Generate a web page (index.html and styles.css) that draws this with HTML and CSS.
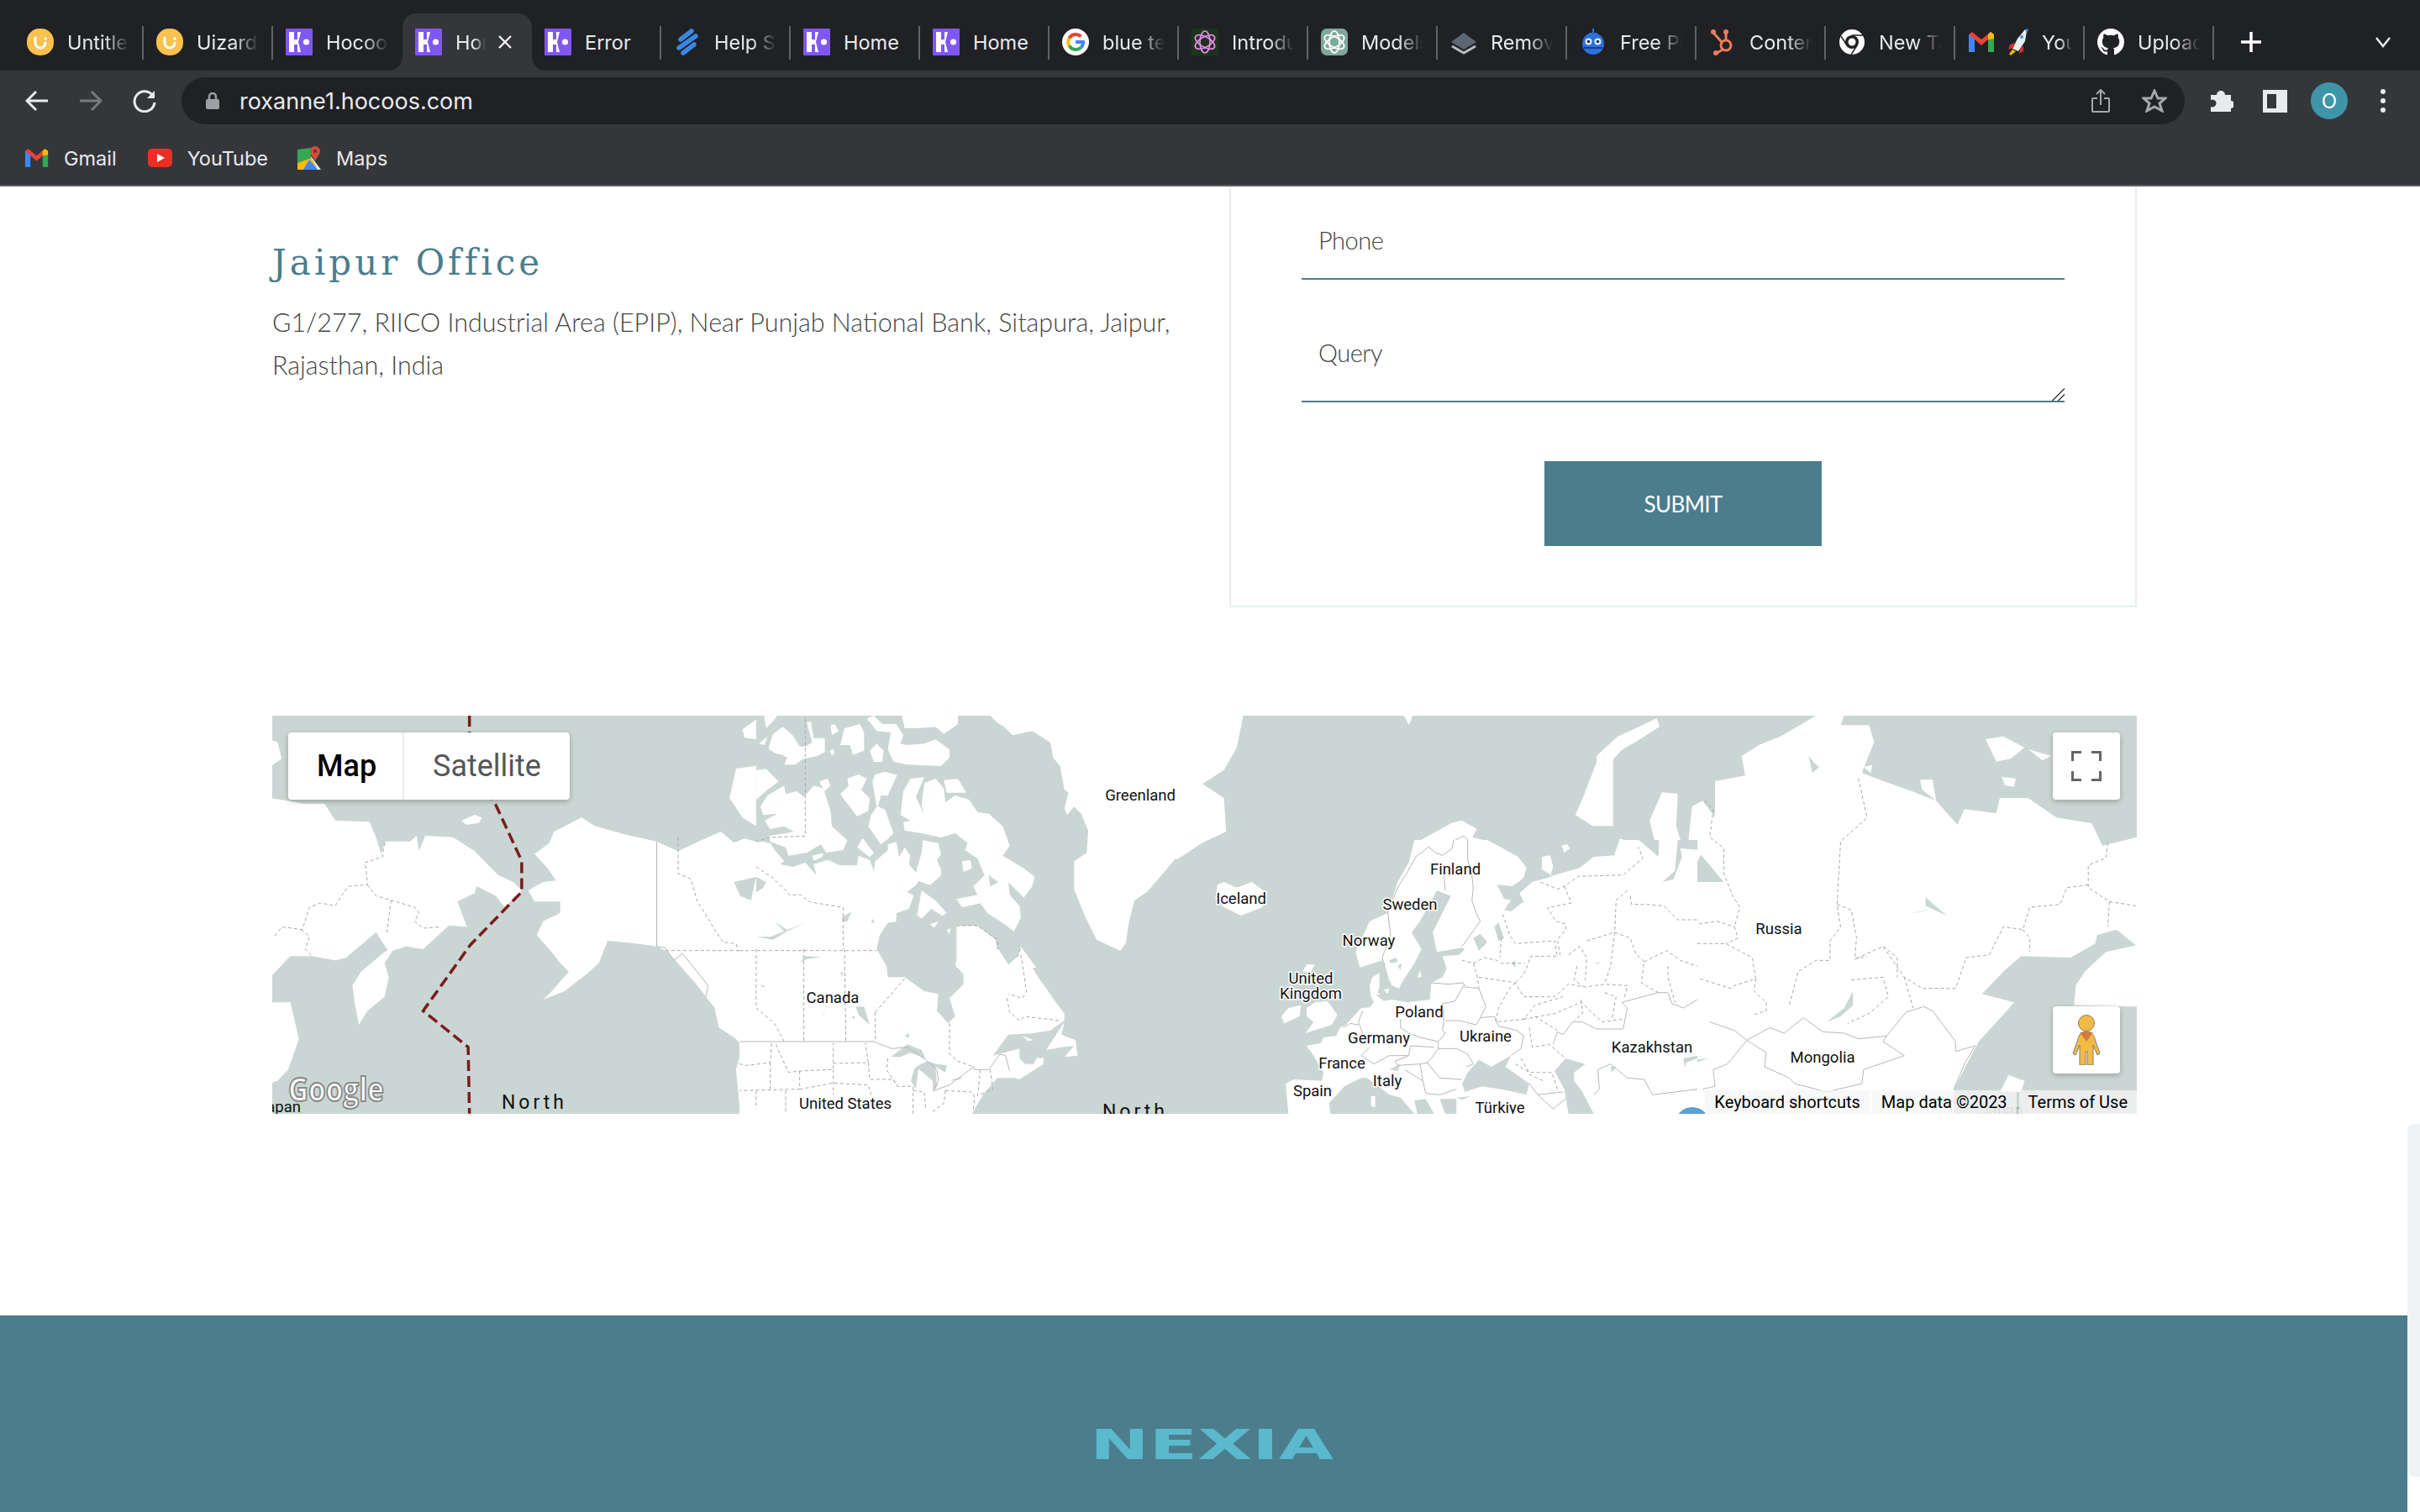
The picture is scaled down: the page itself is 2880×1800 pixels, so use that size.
FILE: index.html
```html
<!DOCTYPE html>
<html lang="en">
<head>
    <meta charset="UTF-8">
    <meta name="viewport" content="width=device-width, initial-scale=1.0">
    <title>Contact - Nexia</title>
    <link rel="stylesheet" href="styles.css">
</head>
<body>
    <!-- Favicon symbols -->
    <svg class="sprite" xmlns="http://www.w3.org/2000/svg">
        <symbol id="fav-uizard" viewBox="0 0 32 32">
            <rect width="32" height="32" rx="15" fill="#f9c14f"/>
            <path d="M10 11v6a6 6 0 0 0 12 0" fill="none" stroke="#fff" stroke-width="3" stroke-linecap="round"/>
            <circle cx="22" cy="12" r="1.8" fill="#fff"/>
        </symbol>
        <symbol id="fav-hocoos" viewBox="0 0 32 32">
            <rect width="32" height="32" rx="1" fill="#8057f2"/>
            <path d="M4 4h6v9h4V4h4l-3 12 3 12h-4v-9h-4v9H4z" fill="#fff"/>
            <circle cx="24.5" cy="16" r="3.6" fill="#fff"/>
        </symbol>
        <symbol id="fav-helpscout" viewBox="0 0 32 32">
            <g fill="none" stroke="#3b86e2" stroke-width="5.5" stroke-linecap="round">
                <path d="M8 13 21 3"/>
                <path d="M6 23 26 9"/>
                <path d="M11 29 24 19"/>
            </g>
        </symbol>
        <symbol id="fav-google" viewBox="0 0 32 32">
            <circle cx="16" cy="16" r="16" fill="#fff"/>
            <g fill="none" stroke-width="4">
                <path d="M8.5 11.5A9 9 0 0 1 22.5 9.5" stroke="#ea4335"/>
                <path d="M8.5 11.5A9 9 0 0 0 8.5 20.5" stroke="#fbbc05"/>
                <path d="M8.5 20.5A9 9 0 0 0 22.5 22.5" stroke="#34a853"/>
                <path d="M22.5 22.5A9 9 0 0 0 25 16H16" stroke="#4285f4"/>
            </g>
        </symbol>
        <symbol id="fav-openai-dark" viewBox="0 0 32 32">
            <rect width="32" height="32" fill="#1d331d"/>
            <g fill="none" stroke="#e58be8" stroke-width="1.7">
                <ellipse cx="16" cy="16" rx="6" ry="13"/>
                <ellipse cx="16" cy="16" rx="6" ry="13" transform="rotate(60 16 16)"/>
                <ellipse cx="16" cy="16" rx="6" ry="13" transform="rotate(120 16 16)"/>
            </g>
        </symbol>
        <symbol id="fav-openai" viewBox="0 0 32 32">
            <rect width="32" height="32" rx="7" fill="#7fa99b"/>
            <g fill="none" stroke="#fff" stroke-width="1.7">
                <ellipse cx="16" cy="16" rx="6" ry="13"/>
                <ellipse cx="16" cy="16" rx="6" ry="13" transform="rotate(60 16 16)"/>
                <ellipse cx="16" cy="16" rx="6" ry="13" transform="rotate(120 16 16)"/>
            </g>
        </symbol>
        <symbol id="fav-layers" viewBox="0 0 32 32">
            <polygon points="16,5 31,16 16,25 1,16" fill="#5c6772"/>
            <polyline points="2,21 16,29 30,21" fill="none" stroke="#b9bdc2" stroke-width="3"/>
        </symbol>
        <symbol id="fav-robot" viewBox="0 0 32 32">
            <path d="M16 0v6" stroke="#2f6fdb" stroke-width="2"/>
            <circle cx="16" cy="18" r="13" fill="#2f6fdb"/>
            <rect x="11" y="5" width="10" height="3" fill="#2f6fdb"/>
            <circle cx="10.5" cy="15.5" r="4" fill="#dfe9fb"/>
            <circle cx="21.5" cy="15.5" r="4" fill="#dfe9fb"/>
            <circle cx="10.5" cy="15.5" r="1.8" fill="#16305f"/>
            <circle cx="21.5" cy="15.5" r="1.8" fill="#16305f"/>
            <path d="M5 23h22" stroke="#16305f" stroke-width="1.5"/>
        </symbol>
        <symbol id="fav-hubspot" viewBox="0 0 32 32">
            <g fill="none" stroke="#ee7c57" stroke-width="3">
                <circle cx="20" cy="20" r="6"/>
                <path d="M20 14V5"/>
                <path d="M15 16 5 5"/>
                <path d="M16 25 8 30"/>
            </g>
            <g fill="#ee7c57">
                <circle cx="5" cy="4" r="3"/>
                <circle cx="20" cy="4" r="3"/>
                <circle cx="8" cy="29" r="3"/>
            </g>
        </symbol>
        <symbol id="fav-chrome" viewBox="0 0 32 32">
            <circle cx="16" cy="16" r="15" fill="#fff"/>
            <circle cx="16" cy="16" r="8" fill="#202124"/>
            <circle cx="16" cy="16" r="4.5" fill="#fff"/>
            <path d="M16 8h13M22 20l-7 11M10 20 3 9" stroke="#202124" stroke-width="1.5"/>
        </symbol>
        <symbol id="fav-gmail" viewBox="0 0 32 24">
            <rect x="1" y="3" width="7" height="21" fill="#4285f4"/>
            <rect x="24" y="3" width="7" height="21" fill="#34a853"/>
            <polygon points="1,3 5,0 16,9 27,0 31,3 24,9 16,16 8,9" fill="#ea4335"/>
            <polygon points="24,3 27,0 31,3 31,8 24,9" fill="#fbbc04"/>
        </symbol>
        <symbol id="fav-rocket" viewBox="0 0 24 32">
            <polygon points="5,24 11,12 20,1 22,3 20,15 12,27" fill="#e8eef2"/>
            <polygon points="20,1 24,0 22,6" fill="#4a90d9"/>
            <polygon points="8,17 2,19 0,25 6,23" fill="#d93025"/>
            <polygon points="14,24 13,30 18,27 18,20" fill="#d93025"/>
            <polygon points="5,25 9,27 3,32 1,30" fill="#fbbc04"/>
            <circle cx="16" cy="10" r="2" fill="#4a90d9"/>
        </symbol>
        <symbol id="fav-github" viewBox="0 0 16 16">
            <path fill="#fff" d="M8 0C3.58 0 0 3.58 0 8c0 3.54 2.29 6.53 5.47 7.59.4.07.55-.17.55-.38 0-.19-.01-.82-.01-1.49-2.01.37-2.53-.49-2.69-.94-.09-.23-.48-.94-.82-1.13-.28-.15-.68-.52-.01-.53.63-.01 1.08.58 1.23.82.72 1.21 1.87.87 2.33.66.07-.52.28-.87.51-1.07-1.78-.2-3.64-.89-3.64-3.95 0-.87.31-1.59.82-2.15-.08-.2-.36-1.02.08-2.12 0 0 .67-.21 2.2.82.64-.18 1.32-.27 2-.27.68 0 1.36.09 2 .27 1.53-1.04 2.2-.82 2.2-.82.44 1.1.16 1.92.08 2.12.51.56.82 1.27.82 2.15 0 3.07-1.87 3.75-3.65 3.95.29.25.54.73.54 1.48 0 1.07-.01 1.93-.01 2.2 0 .21.15.46.55.38A8.013 8.013 0 0016 8c0-4.42-3.58-8-8-8z"/>
        </symbol>
    </svg>

    <!-- Browser chrome -->
    <header class="browser">
        <div class="tab-strip">
            <div class="tab"><svg class="favicon"><use href="#fav-uizard"/></svg><span class="tab-title fade">Untitled</span></div>
            <div class="tab"><svg class="favicon"><use href="#fav-uizard"/></svg><span class="tab-title fade">Uizard</span></div>
            <div class="tab no-sep"><svg class="favicon"><use href="#fav-hocoos"/></svg><span class="tab-title fade">Hocoos</span></div>
            <div class="tab active">
                <svg class="favicon"><use href="#fav-hocoos"/></svg>
                <span class="tab-title fade narrow">Home</span>
                <svg class="tab-close" viewBox="0 0 16 16"><path d="M1 1l14 14M15 1 1 15"/></svg>
            </div>
            <div class="tab"><svg class="favicon"><use href="#fav-hocoos"/></svg><span class="tab-title">Error</span></div>
            <div class="tab"><svg class="favicon"><use href="#fav-helpscout"/></svg><span class="tab-title fade">Help Scout</span></div>
            <div class="tab"><svg class="favicon"><use href="#fav-hocoos"/></svg><span class="tab-title">Home</span></div>
            <div class="tab"><svg class="favicon"><use href="#fav-hocoos"/></svg><span class="tab-title">Home</span></div>
            <div class="tab"><svg class="favicon"><use href="#fav-google"/></svg><span class="tab-title fade">blue text</span></div>
            <div class="tab"><svg class="favicon"><use href="#fav-openai-dark"/></svg><span class="tab-title fade">Introducing</span></div>
            <div class="tab"><svg class="favicon"><use href="#fav-openai"/></svg><span class="tab-title fade">Models</span></div>
            <div class="tab"><svg class="favicon"><use href="#fav-layers"/></svg><span class="tab-title fade">Remove</span></div>
            <div class="tab"><svg class="favicon"><use href="#fav-robot"/></svg><span class="tab-title fade">Free Plan</span></div>
            <div class="tab"><svg class="favicon"><use href="#fav-hubspot"/></svg><span class="tab-title fade">Content</span></div>
            <div class="tab"><svg class="favicon"><use href="#fav-chrome"/></svg><span class="tab-title fade">New Tab</span></div>
            <div class="tab">
                <svg class="favicon"><use href="#fav-gmail"/></svg>
                <svg class="rocket"><use href="#fav-rocket"/></svg>
                <span class="tab-title fade narrow">Your</span>
            </div>
            <div class="tab"><svg class="favicon"><use href="#fav-github"/></svg><span class="tab-title fade">Upload</span></div>
            <svg class="new-tab" viewBox="0 0 28 28"><path d="M14 2v24M2 14h24"/></svg>
            <svg class="tab-search" viewBox="0 0 20 14"><path d="M2 2l8 10 8-10"/></svg>
        </div>

        <div class="toolbar">
            <svg class="tool-icon" viewBox="0 0 28 28"><path d="M27 14H3M13 3 2 14l11 11"/></svg>
            <svg class="tool-icon dim" viewBox="0 0 28 28"><path d="M1 14h24M15 3l11 11-11 11"/></svg>
            <svg class="tool-icon" viewBox="0 0 28 28"><path d="M24 8a12 12 0 1 0 2 8"/><path class="solid" d="M26 2v9h-9z"/></svg>
            <div class="omnibox">
                <svg class="lock" viewBox="0 0 16 20"><path class="lock-loop" d="M4 9V5a4 4 0 0 1 8 0v4"/><rect y="8" width="16" height="12" rx="2"/></svg>
                <span class="url">roxanne1.hocoos.com</span>
                <svg class="omni-share" viewBox="0 0 22 28"><path d="M7 11H2a1 1 0 0 0-1 1v14a1 1 0 0 0 1 1h18a1 1 0 0 0 1-1V12a1 1 0 0 0-1-1h-5M11 19V2M6 6l5-5 5 5"/></svg>
                <svg class="omni-star" viewBox="0 0 30 28"><polygon points="15,2 19,11 28,11 21,17 24,26 15,21 6,26 9,17 2,11 11,11"/></svg>
            </div>
            <svg class="puzzle" viewBox="0 0 28 28"><path d="M1 7h7a5 5 0 1 1 10 0h7v7a4.5 4.5 0 1 1 0 9v4H1v-6a4.5 4.5 0 1 0 0-8z"/></svg>
            <div class="side-panel"></div>
            <div class="avatar">O</div>
            <div class="dots"><span></span><span></span><span></span></div>
        </div>

        <div class="bookmarks">
            <svg class="bm-gmail"><use href="#fav-gmail"/></svg>
            <span class="bm-label">Gmail</span>
            <svg class="bm-youtube" viewBox="0 0 29 22">
                <rect width="29" height="22" rx="5" fill="#ee2d24"/>
                <polygon points="11,6 20,11 11,16" fill="#fff"/>
            </svg>
            <span class="bm-label">YouTube</span>
            <svg class="bm-maps" viewBox="0 0 28 28">
                <polygon points="0,4 16,2 16,14 0,20" fill="#34a853"/>
                <polygon points="0,20 16,14 24,28 0,28" fill="#fbbc04"/>
                <polygon points="7,28 14,16 24,28" fill="#4285f4"/>
                <polygon points="16,12 28,28 24,28 16,14" fill="#e8eaed"/>
                <path d="M21 0a6 6 0 0 1 6 6c0 4-4 7-6 12-2-5-6-8-6-12a6 6 0 0 1 6-6z" fill="#c8503c"/>
                <circle cx="21" cy="6" r="2" fill="#7c2a1c"/>
            </svg>
            <span class="bm-label">Maps</span>
        </div>
    </header>

    <div class="viewport">
        <div class="page">
            <main class="content">
                <section class="contact-row">
                    <div class="office">
                        <h2>Jaipur Office</h2>
                        <p>G1/277, RIICO Industrial Area (EPIP), Near Punjab National Bank, Sitapura, Jaipur, Rajasthan, India</p>
                    </div>
                    <form class="contact-form">
                        <input type="text" placeholder="Phone">
                        <textarea placeholder="Query"></textarea>
                        <button type="button" class="submit-button">SUBMIT</button>
                    </form>
                </section>

                <!-- Map -->
                <section class="map">
                    <svg class="map-canvas" viewBox="324 852 2219 474" xmlns="http://www.w3.org/2000/svg">
                        <!-- Pacific side -->
                        <g transform="translate(320 840) scale(.51 .33333)">
                            <g class="land">
                                <polygon points="0,120 20,130 30,190 0,220"/>
                                <polygon points="0,330 45,340 80,350 130,350 155,410 235,415 250,470 262,530 272,485 330,485 345,465 350,520 365,465 430,470 480,520 525,590 535,605 570,630 590,660 550,720 530,680 485,645 480,670 440,700 462,790 420,785 360,870 320,860 280,880 250,810 180,900 155,910 100,895 50,895 0,975"/>
                                <polygon points="195,1000 215,950 270,880 295,860 270,920 280,970 270,1040 230,1090 210,1140 200,1060"/>
                                <polygon points="0,1060 50,1060 70,1190 45,1300 20,1340 0,1350"/>
                                <polygon points="450,410 480,390 497,400 490,420 460,425"/>
                                <polygon points="620,530 655,490 665,450 730,400 760,430 830,460 905,485 905,860 830,845 790,840 770,920 740,960 690,1020 640,1050 660,1020 700,950 680,920 660,880 625,820 640,770 680,740 680,700 620,700 605,660 640,630 670,625 650,580"/>
                                <polygon points="905,485 955,520 1010,480 1055,450 1085,490 1110,475 1137,486 1160,486 1160,1457 1100,1457 1090,1300 1105,1220 1090,1190 1050,1150 1040,1080 1000,1000 960,930 930,880 905,860"/>
                                <polygon points="1105,85 1137,50 1137,120 1110,115"/>
                                <polygon points="1075,330 1090,225 1137,215 1137,430 1105,400"/>
                            </g>
                            <g class="sea">
                                <polygon points="1085,630 1137,612 1125,695 1100,680"/>
                            </g>
                            <g class="border-dash">
                                <polyline points="270,490 265,540 225,560 230,640 185,645 165,690 155,715 120,705 95,720 78,800 30,790 10,830"/>
                                <polyline points="230,640 250,680 285,695 340,720 350,740 340,770 360,795 400,790"/>
                                <polyline points="285,695 275,815"/>
                                <polyline points="75,800 95,825 85,870 100,895"/>
                                <polyline points="955,470 955,600 985,620 1000,700 1025,760 1040,800 1060,845 1090,850 1095,875"/>
                                <polyline points="925,875 1100,875"/>
                            </g>
                            <g class="border-line">
                                <polyline points="905,485 905,860 925,865 945,910 965,885 1025,1000 1020,1040"/>
                            </g>
                            <polyline class="date-line" points="468,36 468,200 525,340 590,555 590,665 470,855 360,1090 465,1220 468,1457"/>
                        </g>

                        <!-- Arctic Canada and Greenland -->
                        <g transform="translate(900 852) scale(.33333)">
                            <g class="land">
                                <polygon points="28,0 75,0 60,20 35,45"/>
                                <polygon points="45,110 60,65 95,40 130,70 155,110 175,110 200,95 180,25 195,20 205,80 245,80 245,130 215,145 165,155 140,175 100,175 110,150 95,140 70,135 45,120"/>
                                <polygon points="10,100 40,75 30,105"/>
                                <polygon points="265,35 280,30 295,55 270,70"/>
                                <polygon points="300,105 315,45 370,30 385,60 385,125 345,140 335,105"/>
                                <polygon points="262,125 275,120 280,135 270,142"/>
                                <polygon points="405,125 430,100 455,125 450,165 420,165"/>
                                <polygon points="395,10 420,0 450,30 500,30 525,70 515,100 535,105 600,100 640,85 690,120 690,150 660,180 540,175 490,165 470,120 480,60 430,55"/>
                                <polygon points="520,0 720,0 720,30 670,65 640,40 580,45 530,45"/>
                                <polygon points="0,195 35,190 80,235 40,265 0,300"/>
                                <polygon points="15,325 40,285 100,250 105,280 145,270 170,290 205,250 240,260 265,340 270,395 325,445 310,480 250,490 230,460 180,490 115,500 105,470 50,450 45,430 135,415 100,395 50,405 30,375 75,350 25,355"/>
                                <polygon points="225,235 255,225 265,250 245,270"/>
                                <polygon points="300,280 330,250 325,225 365,210 395,225 375,265 405,295 400,340 360,360 330,320"/>
                                <polygon points="425,210 460,200 503,212 470,285 445,285 435,325 460,335 490,420 470,440 445,460 400,395 410,355 430,325 415,235"/>
                                <polygon points="200,500 240,490 235,505 205,518"/>
                                <polygon points="360,470 380,437 420,490 405,505"/>
                                <polygon points="0,450 50,455 70,485 100,520 85,530 130,540 175,525 215,570 205,530 255,515 300,535 360,535 365,500 405,515 420,555 425,520 470,480 470,460 500,450 510,505 530,470 550,500 545,530 570,560 590,490 595,445 650,455 660,495 645,515 660,550 660,570 620,605 580,590 570,605 530,635 515,620 560,640 560,650 545,690 500,705 500,735 470,740 440,785 430,835 430,870 465,900 0,900"/>
                                <polygon points="575,710 590,625 640,660 680,705 665,715 625,690 590,725 565,705"/>
                                <polygon points="515,355 525,270 550,225 600,220 570,290 600,355 590,320 600,240 640,225 670,260 675,310 710,285 760,300 790,345 830,350 880,395 905,465 880,500 955,545 995,575 985,610 955,650 900,595 905,640 940,680 945,720 920,770 880,740 825,705 800,670 735,685 715,655 790,640 775,610 815,570 790,510 745,480 755,455 710,420 660,435 590,420 530,410 525,380 550,375"/>
                                <polygon points="670,230 720,225 750,275 680,275"/>
                                <polygon points="735,520 765,515 770,545 740,558"/>
                                <polygon points="620,745 650,735 635,758"/>
                                <polygon points="680,765 695,760 688,780"/>
                                <polygon points="715,750 790,750 855,800 865,870 900,890 930,870 945,825 1000,900 715,900"/>
                                <polygon points="835,0 860,25 885,40 915,70 985,55 1050,95 1060,150 1085,180 1100,265 1115,275 1100,330 1110,355 1135,325 1160,350 1185,410 1180,490 1135,520 1135,620 1175,720 1215,800 1300,840 1320,810 1330,740 1350,660 1395,630 1502,505 1502,0"/>
                            </g>
                            <g class="sea">
                                <polygon points="830,570 865,595 835,610"/>
                                <polygon points="1115,400 1175,415 1180,430 1125,415"/>
                                <polygon points="0,790 60,800 110,770 175,740 110,765 65,735 100,770 50,790"/>
                                <polygon points="305,720 340,700 325,735 310,735"/>
                                <polygon points="155,880 180,855 235,860 180,865"/>
                                <polygon points="415,725 422,740 410,738"/>
                                <polygon points="0,575 35,595 25,615 0,630"/>
                            </g>
                            <g class="border-dash">
                                <polyline points="175,10 175,430 45,435 0,450"/>
                                <polyline points="0,540 60,580 120,640 160,640 190,665 310,685 310,900"/>
                                <polyline points="0,838 430,838"/>
                                <polyline points="170,838 170,900"/>
                                <polyline points="715,750 790,750 860,800 865,870 900,890 930,870 945,825"/>
                            </g>
                        </g>

                        <!-- Southern Canada and the northern US -->
                        <g transform="translate(880 1130) scale(.33333)">
                            <g class="land">
                                <polygon points="0,0 490,0 525,60 530,100 590,100 660,150 710,160 705,220 745,265 770,240 750,175 800,125 800,90 770,55 790,0 925,0 960,55 1000,20 1010,0 1060,90 1130,190 1160,230 1160,255 1110,290 1050,300 960,305 905,380 1000,355 1000,390 1020,410 1050,410 1065,385 1085,400 1080,410 980,460 920,460 870,520 830,588 0,588"/>
                                <polygon points="1095,360 1160,260 1150,305 1200,325 1207,380 1160,385 1195,345 1150,350"/>
                                <polygon points="980,460 1085,385 1085,410 1000,465"/>
                                <polygon points="1010,310 1050,325 1030,328"/>
                            </g>
                            <g class="sea">
                                <polygon points="540,385 600,340 650,360 665,390 610,370 575,385"/>
                                <polygon points="612,470 625,425 640,420 630,500"/>
                                <polygon points="630,420 670,400 705,410 740,415 735,440 700,420 705,490 690,510 690,470"/>
                                <polygon points="760,465 800,455 785,465 755,470"/>
                                <polygon points="590,310 605,300 605,318"/>
                                <polygon points="415,205 445,205 465,270 425,235"/>
                                <polygon points="215,50 235,25 295,28 240,35"/>
                                <polygon points="300,235 310,220 295,238"/>
                                <polygon points="400,245 410,235 410,250"/>
                                <polygon points="360,85 368,80 368,100"/>
                                <polygon points="75,125 95,135 80,135"/>
                            </g>
                            <g class="border-dash">
                                <polyline points="60,0 60,210 125,265 160,330"/>
                                <polyline points="230,0 230,330"/>
                                <polyline points="375,0 380,330"/>
                                <polyline points="485,225 590,105"/>
                                <polyline points="485,225 485,325"/>
                                <polyline points="0,5 490,5"/>
                                <polyline points="750,265 750,375 780,400 835,420"/>
                                <polyline points="955,175 965,225 1000,255 1020,240 1140,255"/>
                                <polyline points="1005,20 1025,150 1010,175 960,160"/>
                                <polyline points="0,410 25,415 110,405 115,335"/>
                                <polyline points="110,405 110,500"/>
                                <polyline points="130,340 175,440 215,435 335,430 335,335"/>
                                <polyline points="335,408 460,405 450,335"/>
                                <polyline points="215,435 215,500 0,505"/>
                                <polyline points="215,500 335,478 460,485 470,520"/>
                                <polyline points="335,430 335,520"/>
                                <polyline points="460,405 465,465 550,465 565,490 620,490 620,588"/>
                                <polyline points="60,505 60,570"/>
                                <polyline points="165,505 165,588"/>
                                <polyline points="620,505 660,510 665,570"/>
                                <polyline points="735,505 830,510 840,530 835,570"/>
                                <polyline points="735,505 730,550 690,580"/>
                                <polyline points="860,430 850,530"/>
                                <polyline points="895,430 905,500 860,520"/>
                                <polyline points="530,390 525,430 565,490"/>
                            </g>
                            <g class="border-line">
                                <polyline points="0,330 485,330 490,335 545,355 600,350 665,395 705,430 710,470 695,505 750,485 835,420 838,430 890,430 930,375 950,380 965,435"/>
                            </g>
                        </g>

                        <!-- Greenland east coast, Iceland, north Scandinavia -->
                        <g transform="translate(1120 840) scale(.51 .33333)">
                            <g class="land">
                                <polygon points="549,36 705,36 690,150 660,230 610,280 660,330 665,450 610,490 550,550 549,550"/>
                                <polygon points="1080,36 1100,36 1092,70"/>
                                <polygon points="645,640 660,630 690,650 725,630 760,670 750,720 700,750 660,720 640,690"/>
                                <polygon points="1480,390 1500,320 1530,200 1568,130 1568,430 1520,430"/>
                                <polygon points="1120,480 1190,420 1215,410 1250,440 1240,470 1290,490 1290,520 1120,520"/>
                            </g>
                            <g class="border-line">
                                <polyline points="1190,520 1200,480 1220,465 1235,490 1235,510"/>
                            </g>
                        </g>

                        <!-- Siberia -->
                        <g transform="translate(1900 840) scale(.421 .33333)">
                            <g class="land">
                                <polygon points="0,180 60,110 130,70 170,45 178,75 130,115 70,160 35,210 30,250 0,290"/>
                                <polygon points="0,535 50,540 65,475 120,495 175,540 150,410 185,310 230,315 225,430 245,510 300,520 280,570 240,620 210,630 360,630 260,480 270,360 300,340 335,400 335,270 420,250 410,180 460,140 520,110 620,36 700,36 690,70 770,70 785,130 750,240 800,265 900,310 960,340 1020,425 1040,370 1130,385 1140,330 1220,330 1300,400 1400,420 1430,500 1528,470 1528,860 1470,800 1415,820 1410,850 1340,900 1200,895 1150,950 1090,1030 1180,1060 1160,1090 1080,1200 1010,1370 1010,1457 0,1457"/>
                                <polygon points="1350,1070 1355,1000 1380,950 1440,880 1528,855 1528,1075"/>
                                <polygon points="1140,1380 1165,1320 1210,1340 1200,1380"/>
                                <polygon points="1100,120 1150,110 1210,150 1170,190 1130,200"/>
                                <polygon points="1220,155 1285,180 1260,195"/>
                                <polygon points="915,265 950,265 960,340 920,300"/>
                                <polygon points="1145,255 1185,260 1180,290 1155,285"/>
                                <polygon points="755,220 780,212 775,240"/>
                            </g>
                            <g class="sea">
                                <polygon points="650,1130 700,1080 725,1020 725,1070 690,1110"/>
                                <polygon points="240,1270 315,1260 280,1275 245,1295"/>
                                <polygon points="427,580 453,535 435,565"/>
                                <polygon points="930,685 990,750 930,715"/>
                                <polygon points="875,745 950,725 920,735"/>
                                <polygon points="600,180 615,205 630,220 610,240 605,210"/>
                            </g>
                        </g>

                        <!-- Europe, redrawn over a clean patch of sea -->
                        <rect class="sea-patch" x="1520" y="1000" width="500" height="326"/>
                        <g transform="translate(1520 1000) scale(.33333)">
                            <g class="land">
                                <polygon points="490,0 750,0 860,60 890,100 880,135 840,165 785,160 810,210 835,215 810,250 835,255 880,220 865,190 910,150 985,130 945,105 945,60 975,55 985,95 975,130 1080,100 1130,60 1203,55 1222,0 1500,0 1500,978 40,978 30,870 60,855 160,860 165,830 130,770 105,735 155,725 165,705 210,700 225,670 245,660 300,600 330,598 345,580 335,560 330,520 340,490 365,475 365,525 355,555 380,575 410,570 465,580 545,570 550,510 590,490 605,460 590,415 650,410 670,390 660,385 570,400 555,330 585,270 620,200 570,180 510,290 480,330 515,390 490,440 450,500 435,530 410,520 400,500 385,450 375,430 295,455 280,400 330,290 395,260 430,150 470,80"/>
                                <polygon points="105,600 135,580 180,575 215,625 195,660 100,690 130,650 105,630"/>
                                <polygon points="15,630 40,600 85,590 80,630 25,655"/>
                                <polygon points="105,445 135,445 120,470 90,470"/>
                                <polygon points="1015,20 1035,15 1045,30 1025,45"/>
                                <polygon points="500,490 510,465 515,490"/>
                                <polygon points="355,540 370,555 355,550"/>
                                <polygon points="380,535 400,530 395,550"/>
                            </g>
                            <g class="sea">
                                <polygon points="1363,0 1361,60 1291,0"/>
                                <polygon points="1430,0 1500,0 1500,35 1440,30 1445,60 1415,140 1375,150 1420,110"/>
                                <polygon points="400,430 425,420 430,435 405,440"/>
                                <polygon points="430,450 445,440 440,465"/>
                                <polygon points="700,350 725,335 750,365 720,395"/>
                                <polygon points="775,310 790,295 810,350 790,360"/>
                                <polygon points="240,880 300,850 320,850 375,890 400,910 440,920 490,978 190,978 185,940"/>
                                <polygon points="400,820 440,800 430,825"/>
                                <polygon points="490,930 530,925 560,978 500,978"/>
                                <polygon points="580,925 640,925 640,978 600,978"/>
                                <polygon points="640,920 690,915 660,928"/>
                                <polygon points="660,870 680,830 720,785 765,810 780,800 835,770 815,810 900,870 890,910 800,890 730,880 670,900"/>
                                <polygon points="990,825 1030,780 1100,800 1060,830 1060,860 1090,900 1130,978 1040,978 1025,890"/>
                                <polygon points="1190,810 1210,810 1195,830"/>
                                <polygon points="1450,780 1500,770 1500,780 1460,795 1455,815"/>
                                <polygon points="835,440 850,430 850,455"/>
                                <polygon points="1135,440 1155,435 1140,445"/>
                            </g>
                            <polygon class="land-island" points="335,915 350,915 350,955 335,950"/>
                            <g class="border-line">
                                <polyline points="430,170 470,105 495,60 540,25 565,45 590,55 625,30 630,0"/>
                                <polyline points="680,0 680,70 695,125 700,175 695,215 710,260 725,290 660,380"/>
                                <polyline points="430,170 395,260 405,340 375,420 385,450"/>
                                <polyline points="595,130 600,180"/>
                                <polyline points="550,510 610,515 665,510 670,525 720,530 745,595 725,635 775,630 790,665 855,680 880,700 870,745 835,770"/>
                                <polyline points="665,520 635,575 590,585 595,650 590,680 600,690 575,720 510,705 470,690 440,670 440,640"/>
                                <polyline points="600,645 650,645 710,660 725,635"/>
                                <polyline points="575,745 640,745 680,765 700,800 675,810"/>
                                <polyline points="575,720 575,745 550,780 535,795 580,850 660,855"/>
                                <polyline points="305,610 290,650 305,690"/>
                                <polyline points="235,670 260,655 290,660"/>
                                <polyline points="330,740 300,770 345,800 400,770 470,770 475,735 560,740"/>
                                <polyline points="470,770 420,790 430,805 510,800 540,795"/>
                                <polyline points="455,820 520,860 530,905 580,910 640,890"/>
                                <polyline points="510,800 520,860"/>
                                <polyline points="1020,695 1055,650 1090,650 1140,675 1235,675 1240,650 1250,600 1230,580 1360,545 1395,545 1410,585 1450,600 1500,570"/>
                                <polyline points="1020,695 1000,685 985,730"/>
                                <polyline points="900,870 930,910 1020,900"/>
                                <polyline points="930,910 985,960 1030,925"/>
                                <polyline points="1145,820 1190,800 1250,850 1310,855 1340,910 1500,890"/>
                                <polyline points="1145,820 1150,890 1130,910"/>
                            </g>
                            <g class="border-dash">
                                <polyline points="940,150 1000,175 1025,165 1075,130 1235,125 1305,65 1290,25"/>
                                <polyline points="1025,165 1050,225 965,242 995,290 1030,300 1030,320 1000,355 1010,410"/>
                                <polyline points="1250,180 1210,215 1205,330 1190,450 1170,510"/>
                                <polyline points="1260,200 1265,230 1320,230 1380,235 1430,285 1500,285"/>
                                <polyline points="1205,330 1260,350 1280,405 1310,435 1300,510 1360,545"/>
                                <polyline points="1310,435 1390,395 1440,430 1500,450"/>
                                <polyline points="1395,450 1395,490 1420,580"/>
                                <polyline points="805,265 830,340 850,370 990,360 1000,415 905,415 885,470 870,490 850,510"/>
                                <polyline points="660,430 700,440 715,490 720,530"/>
                                <polyline points="700,440 740,420 785,430 800,440 885,440"/>
                                <polyline points="800,350 795,420"/>
                                <polyline points="720,490 850,510 880,560 990,560 1040,515 1100,525 1170,515 1250,520 1240,565"/>
                                <polyline points="1040,410 1080,380 1105,420 1100,500"/>
                                <polyline points="1105,360 1205,330"/>
                                <polyline points="1070,450 1060,500 1095,525"/>
                                <polyline points="850,510 830,530 790,600 780,650 880,640 920,590 1020,560"/>
                                <polyline points="880,640 990,620 1085,580 1160,650 1235,640"/>
                                <polyline points="1085,570 1090,620 1060,645"/>
                                <polyline points="900,670 910,740 970,730 1030,780"/>
                                <polyline points="920,630 1000,680"/>
                                <polyline points="850,800 900,830 980,830 1000,890"/>
                                <polyline points="870,780 905,840 950,860"/>
                                <polyline points="1170,545 1210,560 1195,640"/>
                            </g>
                        </g>

                        <!-- Siberia borders -->
                        <g transform="translate(1900 840) scale(.421 .33333)">
                            <g class="border-dash">
                                <polyline points="285,850 365,850 440,900 450,975 390,1000 380,1010 290,975"/>
                                <polyline points="450,975 445,1020 480,1060 480,1090 440,1105"/>
                                <polyline points="305,340 330,370 320,470 360,510 360,600 385,680 405,720 390,790 400,830 365,850"/>
                                <polyline points="290,780 340,770 390,790"/>
                                <polyline points="740,260 765,400 690,485 680,710 690,790 660,840 660,910 620,910 570,950 545,1070"/>
                                <polyline points="680,710 720,730 735,830 730,905 765,895"/>
                                <polyline points="1445,490 1440,545 1390,570 1390,650 1450,700 1525,715"/>
                                <polyline points="1390,640 1330,650 1310,710 1225,720 1205,800 1150,790 1110,890 1045,900 1015,1010 920,1010 870,970 810,860 730,905"/>
                                <polyline points="1205,800 1225,830 1225,880"/>
                                <polyline points="810,860 850,900 850,970"/>
                                <polyline points="720,980 810,970 825,1040 770,1100 710,1135"/>
                                <polyline points="1450,700 1445,790"/>
                                <polyline points="870,970 895,1080"/>
                            </g>
                            <g class="border-line">
                                <polyline points="320,1130 390,1160 425,1195"/>
                                <polyline points="425,1195 490,1150 530,1170 585,1115 640,1165 700,1170 740,1190 820,1180 875,1095 925,1075 950,1090 1015,1200 1015,1235 1070,1215 1040,1280 1010,1370"/>
                                <polyline points="425,1195 480,1240 475,1290 545,1330 560,1350 650,1380 750,1350 755,1300 870,1250 810,1200 820,1180"/>
                                <polyline points="425,1195 370,1280 330,1300 335,1360 300,1370"/>
                            </g>
                        </g>

                        <circle cx="2014" cy="1339" r="21" fill="#5ba3d0"/>

                        <!-- labels -->
                        <g class="labels">
                            <text x="1357" y="953">Greenland</text>
                            <text class="halo" x="1477" y="1076">Iceland</text>
                            <text x="1732" y="1041">Finland</text>
                            <text class="halo" x="1678" y="1083">Sweden</text>
                            <text class="halo" x="1629" y="1126">Norway</text>
                            <text class="halo" x="1560" y="1171">United</text>
                            <text class="halo" x="1560" y="1189">Kingdom</text>
                            <text x="1689" y="1211">Poland</text>
                            <text x="1641" y="1242">Germany</text>
                            <text x="1768" y="1240">Ukraine</text>
                            <text class="halo" x="1597" y="1272">France</text>
                            <text class="halo" x="1651" y="1293">Italy</text>
                            <text x="1562" y="1305">Spain</text>
                            <text x="1785" y="1325">Türkiye</text>
                            <text x="991" y="1194">Canada</text>
                            <text x="1006" y="1320">United States</text>
                            <text x="2117" y="1112">Russia</text>
                            <text x="1966" y="1253">Kazakhstan</text>
                            <text x="2169" y="1265">Mongolia</text>
                            <text class="left-cut" x="358" y="1324">Japan</text>
                            <text class="ocean" x="636" y="1320">North</text>
                            <text class="ocean" x="1351" y="1331">North</text>
                            <text class="ghost" x="2382" y="1328">Japan</text>
                        </g>
                        <text class="google-mark" x="343" y="1311" textLength="114" lengthAdjust="spacingAndGlyphs">Google</text>
                    </svg>

                    <div class="map-type">
                        <span class="map-type-btn selected">Map</span>
                        <span class="map-type-btn">Satellite</span>
                    </div>
                    <div class="map-button fullscreen">
                        <svg viewBox="0 0 36 36"><path d="M0 12V0h12M24 0h12v12M36 24v12H24M12 36H0V24"/></svg>
                    </div>
                    <div class="map-button pegman">
                        <svg viewBox="0 0 34 60">
                            <circle cx="17" cy="10" r="9.5"/>
                            <path d="M17 20C10 20 8 24 6 32L1 46l3 2 5-12v24h7V44h2v16h7V36l5 12 3-2-5-14c-2-8-4-12-11-12z"/>
                            <polygon class="scarf" points="9,21 25,21 17,32"/>
                        </svg>
                    </div>
                    <div class="attribution">
                        <span>Keyboard shortcuts</span>
                        <span>Map data ©2023</span>
                        <span>Terms of Use</span>
                    </div>
                </section>
            </main>

            <footer class="site-footer">
                <svg class="nexia-logo" viewBox="0 0 290 40">
                    <text x="0" y="38" textLength="290" lengthAdjust="spacingAndGlyphs">NEXIA</text>
                </svg>
            </footer>
        </div>
        <div class="scrollbar"><div class="scroll-thumb"></div></div>
    </div>
</body>
</html>
```

FILE: styles.css
```css
/* Base */
* {
    box-sizing: border-box;
}

html, body {
    margin: 0;
    padding: 0;
    height: 1800px;
    overflow: hidden;
    background-color: white;
}

body {
    font-family: "Lato", "Liberation Sans", sans-serif;
    display: flex;
    flex-direction: column;
}

.sprite {
    display: none;
}

/* Browser chrome */
.browser {
    font-family: "Inter", "Liberation Sans", sans-serif;
    color: #e8eaed;
    background-color: #35363a;
    border-bottom: 2px solid #5f6065;
}

.tab-strip {
    height: 84px;
    padding: 16px 0 0 17px;
    display: flex;
    background-color: #202124;
}

.tab {
    width: 154px;
    height: 68px;
    padding-left: 15px;
    display: flex;
    align-items: center;
    gap: 16px;
    flex-shrink: 0;
    position: relative;
    background: linear-gradient(#5f6368, #5f6368) right 0 top 15px / 2px 40px no-repeat;
}

.tab.no-sep {
    background: none;
}

.tab.active {
    background: #35363a;
    border-radius: 16px 16px 0 0;
}

.tab.active::before,
.tab.active::after {
    content: "";
    position: absolute;
    bottom: 0;
    width: 16px;
    height: 16px;
}

.tab.active::before {
    left: -16px;
    background: radial-gradient(circle at 0 0, transparent 15.5px, #35363a 16px);
}

.tab.active::after {
    right: -16px;
    background: radial-gradient(circle at 100% 0, transparent 15.5px, #35363a 16px);
}

.favicon {
    width: 32px;
    height: 32px;
    flex-shrink: 0;
}

.rocket {
    width: 24px;
    height: 32px;
    flex-shrink: 0;
}

.tab-title {
    width: 74px;
    font-size: 23.5px;
    white-space: nowrap;
    overflow: hidden;
}

.tab-title.fade {
    -webkit-mask-image: linear-gradient(to right, #000 60%, transparent);
    mask-image: linear-gradient(to right, #000 60%, transparent);
}

.tab-title.narrow {
    width: 36px;
}

.tab-close {
    width: 16px;
    height: 16px;
    margin-left: -1px;
    fill: none;
    stroke: #fff;
    stroke-width: 2.2;
}

.new-tab {
    width: 28px;
    height: 28px;
    margin: 20px 0 0 30px;
    fill: none;
    stroke: #fff;
    stroke-width: 3.5;
}

.tab-search {
    width: 20px;
    height: 14px;
    margin: 27px 34px 0 auto;
    fill: none;
    stroke: #e8eaed;
    stroke-width: 2.5;
}

.toolbar {
    height: 64px;
    padding: 8px 0 0 30px;
    display: flex;
    align-items: center;
}

.tool-icon {
    width: 28px;
    height: 28px;
    margin-right: 36px;
    fill: none;
    stroke: #e8eaed;
    stroke-width: 3;
}

.tool-icon:nth-child(3) {
    margin-right: 30px;
}

.tool-icon.dim {
    stroke: #777a7e;
}

.tool-icon .solid {
    fill: #e8eaed;
    stroke: none;
}

.omnibox {
    width: 2384px;
    height: 56px;
    padding: 0 21px 0 29px;
    display: flex;
    align-items: center;
    background-color: #202124;
    border-radius: 28px;
}

.lock {
    width: 16px;
    height: 20px;
    fill: #9aa0a6;
}

.lock-loop {
    fill: none;
    stroke: #9aa0a6;
    stroke-width: 2.5;
}

.url {
    margin-left: 24px;
    font-size: 27px;
    color: #e8eaed;
}

.omni-share {
    width: 22px;
    height: 28px;
    margin-left: auto;
    fill: none;
    stroke: #a6a8ab;
    stroke-width: 2;
}

.omni-star {
    width: 30px;
    height: 28px;
    margin-left: 38px;
    fill: none;
    stroke: #a6a8ab;
    stroke-width: 3;
}

.puzzle {
    width: 28px;
    height: 28px;
    margin-left: 30px;
    fill: #e8eaed;
}

.side-panel {
    width: 29px;
    height: 27px;
    margin-left: 35px;
    border: 5px solid #e8eaed;
    border-right-width: 13px;
}

.avatar {
    width: 44px;
    height: 44px;
    margin-left: 28px;
    display: flex;
    align-items: center;
    justify-content: center;
    font-size: 24px;
    color: white;
    background-color: #4094a8;
    border-radius: 50%;
}

.dots {
    margin-left: 39px;
    display: flex;
    flex-direction: column;
    gap: 5px;
}

.dots span {
    width: 6px;
    height: 6px;
    background-color: #e8eaed;
    border-radius: 50%;
}

.bookmarks {
    height: 72px;
    padding: 8px 0 0 29px;
    display: flex;
    align-items: center;
}

.bm-label {
    margin: 0 35px 0 18px;
    font-size: 23.5px;
}

.bm-gmail {
    width: 29px;
    height: 22px;
}

.bm-youtube {
    width: 29px;
    height: 22px;
    margin-left: 2px;
}

.bm-maps {
    width: 28px;
    height: 28px;
}

/* Page */
.viewport {
    flex: 1;
    display: flex;
    min-height: 0;
}

.page {
    flex: 1;
    display: flex;
    flex-direction: column;
}

.scrollbar {
    width: 15px;
    padding-top: 1116px;
    background-color: white;
}

.scroll-thumb {
    height: 420px;
    background-color: #eff3f5;
    border-radius: 8px 0 0 8px;
}

.content {
    flex: 1;
    padding: 0 322px 0 324px;
}

.contact-row {
    display: grid;
    grid-template-columns: 1fr 1080px;
    height: 501px;
}

.office h2 {
    margin: 66px 0 0;
    font-family: "DejaVu Serif", serif;
    font-size: 42px;
    font-weight: 400;
    letter-spacing: 4px;
    color: #4b7d8c;
}

.office p {
    margin: 21px 0 0;
    width: 1090px;
    font-size: 30.5px;
    font-weight: 300;
    line-height: 51px;
    color: #444;
}

.contact-form {
    padding: 17px 84px 0 84px;
    display: flex;
    flex-direction: column;
    border: 2px solid #e6edf0;
    border-top: none;
}

.contact-form input,
.contact-form textarea {
    width: 100%;
    padding: 0 20px;
    font-family: inherit;
    font-size: 29px;
    font-weight: 300;
    letter-spacing: -0.5px;
    color: #444;
    background: none;
    border: none;
    border-bottom: 2px solid #4b7d8c;
    border-radius: 0;
    outline: none;
}

.contact-form input {
    height: 94px;
}

.contact-form textarea {
    height: 101px;
    margin-top: 45px;
    padding-top: 24px;
    line-height: 36px;
    display: block;
}

.contact-form textarea::-webkit-resizer {
    background: linear-gradient(135deg, transparent 0 48%, #444 48% 55%, transparent 55% 72%, #444 72% 79%, transparent 79%);
}

.contact-form ::placeholder {
    color: #444;
    opacity: 1;
}

.submit-button {
    width: 330px;
    height: 101px;
    margin: 70px auto 0;
    font-family: inherit;
    font-size: 26px;
    font-weight: 400;
    letter-spacing: -0.6px;
    color: white;
    background-color: #4b7d8c;
    border: none;
}

/* Map */
.map {
    position: relative;
    height: 474px;
    margin-top: 129px;
    overflow: hidden;
    font-family: "Roboto", sans-serif;
    background-color: #cad6d3;
}

.map-canvas {
    display: block;
    width: 2219px;
    height: 474px;
}

.land polygon,
.land-island {
    fill: white;
}

.sea polygon,
.sea-patch {
    fill: #cad6d3;
}

.border-dash polyline {
    fill: none;
    stroke: #a5a9a9;
    stroke-width: 1;
    stroke-dasharray: 4 3;
    vector-effect: non-scaling-stroke;
}

.border-line polyline {
    fill: none;
    stroke: #b5b8b8;
    stroke-width: 1;
    vector-effect: non-scaling-stroke;
}

.date-line {
    fill: none;
    stroke: #7a1c1c;
    stroke-width: 3.5;
    stroke-dasharray: 13 6;
    vector-effect: non-scaling-stroke;
}

.labels text {
    font-family: "Roboto", sans-serif;
    font-size: 18.5px;
    text-anchor: middle;
    fill: #111;
}

.labels text.halo {
    paint-order: stroke;
    stroke: white;
    stroke-width: 3px;
}

.labels text.left-cut {
    text-anchor: end;
}

.labels text.ocean {
    font-size: 23px;
    letter-spacing: 4px;
}

.labels text.ghost {
    fill: #999;
}

.google-mark {
    font-family: "Open Sans", sans-serif;
    font-size: 39px;
    font-weight: 700;
    fill: #fff;
    stroke: #858989;
    stroke-width: 2px;
}

.map-type {
    position: absolute;
    top: 20px;
    left: 19px;
    height: 80px;
    display: flex;
    font-size: 36px;
    color: #565656;
    background-color: white;
    border-radius: 4px;
    box-shadow: 0 2px 6px rgba(0, 0, 0, 0.25);
}

.map-type-btn {
    padding: 0 34px;
    display: flex;
    align-items: center;
}

.map-type-btn.selected {
    width: 138px;
    font-weight: 500;
    color: black;
    border-right: 2px solid #ececec;
}

.map-button {
    position: absolute;
    right: 20px;
    width: 80px;
    height: 80px;
    display: flex;
    align-items: center;
    justify-content: center;
    background-color: white;
    border-radius: 4px;
    box-shadow: 0 2px 6px rgba(0, 0, 0, 0.25);
}

.fullscreen {
    top: 20px;
}

.fullscreen svg {
    width: 36px;
    height: 36px;
    fill: none;
    stroke: #666;
    stroke-width: 6;
}

.pegman {
    top: 346px;
}

.pegman svg {
    width: 34px;
    height: 60px;
    fill: #f3bb44;
    stroke: #7a7a7a;
    stroke-width: 1;
}

.pegman .scarf {
    fill: #cf7a3e;
    stroke: none;
}

.attribution {
    position: absolute;
    right: 0;
    bottom: 0;
    height: 28px;
    display: flex;
    gap: 3px;
    font-size: 20px;
    line-height: 28px;
    color: black;
}

.attribution span {
    padding: 0 11px;
    background-color: rgba(245, 245, 245, 0.75);
}

/* Footer */
.site-footer {
    height: 234px;
    padding: 133px 0 0 19px;
    display: flex;
    justify-content: center;
    background-color: #4b7d8c;
}

.nexia-logo {
    width: 290px;
    height: 40px;
}

.nexia-logo text {
    font-family: "DejaVu Sans", sans-serif;
    font-size: 50px;
    font-weight: 700;
    fill: #5bb9cd;
}
```
